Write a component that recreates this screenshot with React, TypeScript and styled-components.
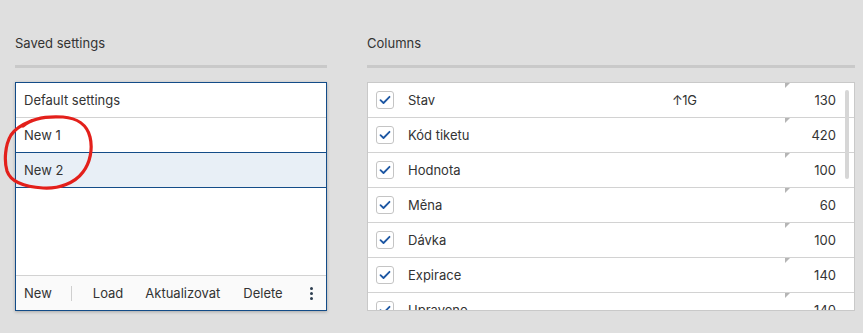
import React from 'react';
import styled, { createGlobalStyle } from 'styled-components';

const GlobalStyle = createGlobalStyle`
    html, body {
        margin: 0;
        padding: 0;
        background: #dfdfdf;
    }
    body {
        font-family: Inter, "Open Sans", sans-serif;
        color: #333;
        font-size: 13px;
    }
`;

const Page = styled.div`
    display: flex;
    gap: 40px;
    padding: 34px 8px 0 15px;
    height: 333px;
    box-sizing: border-box;
`;

const Column = styled.section<{ width: number }>`
    width: ${props => props.width}px;
    display: flex;
    flex-direction: column;
`;

const Title = styled.h2`
    margin: 0;
    font-size: 13px;
    font-weight: 400;
    line-height: 18px;
    color: #333;
`;

const Rule = styled.div`
    height: 3px;
    background: #c9c9c9;
    margin: 13px 0 14px;
`;

const SavedBox = styled.div`
    position: relative;
    height: 229px;
    box-sizing: border-box;
    border: 1px solid #134c88;
    background: #fff;
    display: flex;
    flex-direction: column;
    box-shadow: 0 1px 3px rgba(0, 0, 0, 0.25);
`;

const SavedList = styled.ul`
    flex: 1;
    list-style-type: none;
    margin: 0;
    padding: 0;
`;

const SavedItem = styled.li<{ selected?: boolean }>`
    height: 34px;
    display: flex;
    align-items: center;
    padding-left: 8px;
    border-bottom: 1px solid ${props => props.selected ? '#134c88' : '#d2d2d2'};
    background: ${props => props.selected ? '#e8eff6' : '#fff'};
    box-shadow: ${props => props.selected ? '0 -1px 0 #134c88' : 'none'};
`;

const Footer = styled.div`
    height: 34px;
    border-top: 1px solid #d2d2d2;
    background: #fafafa;
    display: flex;
    align-items: center;
    padding-left: 8px;
`;

const FooterButton = styled.button<{ space?: number }>`
    background: none;
    border: none;
    padding: 0;
    margin-right: ${props => props.space ?? 20}px;
    font: inherit;
    color: #333;
    cursor: pointer;
`;

const Divider = styled.span`
    width: 1px;
    height: 15px;
    background: #cfcfcf;
    margin: 0 21px 0 0;
`;

const Kebab = styled.button`
    margin-left: auto;
    margin-right: 13px;
    display: flex;
    flex-direction: column;
    gap: 2px;
    background: none;
    border: none;
    padding: 0;
    cursor: pointer;
    span {
        width: 3px;
        height: 3px;
        border-radius: 50%;
        background: #2d3e50;
    }
`;

const Scribble = styled.svg`
    position: absolute;
    left: -15px;
    top: 32px;
    pointer-events: none;
`;

const ColumnsBox = styled.div`
    position: relative;
    height: 229px;
    box-sizing: border-box;
    border: 1px solid #c9c9c9;
    background: #fff;
    overflow: hidden;
`;

const ColumnRow = styled.div`
    height: 34px;
    display: grid;
    grid-template-columns: 18px 278px 113px 60px;
    align-items: center;
    padding-left: 8px;
    border-bottom: 1px solid #d2d2d2;
`;

const Check = styled.span`
    width: 18px;
    height: 18px;
    box-sizing: border-box;
    border: 1px solid #c4c4c4;
    border-radius: 3px;
    display: flex;
    align-items: center;
    justify-content: center;
`;

const Label = styled.span`
    padding-left: 14px;
`;

const Tag = styled.span`
    letter-spacing: -0.5px;
`;

const WidthCell = styled.span`
    position: relative;
    height: 100%;
    display: flex;
    align-items: center;
    justify-content: flex-end;
    padding-right: 9px;
    &::before {
        content: '';
        position: absolute;
        left: 0;
        top: 0;
        border-top: 5px solid #b5b5b5;
        border-right: 5px solid transparent;
    }
`;

const ScrollThumb = styled.div`
    position: absolute;
    right: 5px;
    top: 7px;
    width: 4px;
    height: 89px;
    border-radius: 2px;
    background: #d6d6d6;
`;

const saved = [
    { name: 'Default settings' },
    { name: 'New 1' },
    { name: 'New 2', selected: true },
];

const columns = [
    { name: 'Stav', tag: '↑1G', width: 130 },
    { name: 'Kód tiketu', width: 420 },
    { name: 'Hodnota', width: 100 },
    { name: 'Měna', width: 60 },
    { name: 'Dávka', width: 100 },
    { name: 'Expirace', width: 140 },
    { name: 'Upraveno', width: 140 },
];

const CheckIcon = () => (
    <svg width="12" height="10" viewBox="0 0 12 10">
        <path d="M1.5 5.2 L4.5 8 L10.5 1.8" fill="none" stroke="#1d57a3" strokeWidth="1.8" strokeLinecap="round" strokeLinejoin="round" />
    </svg>
);

const App: React.FC = () => {
    return (
        <>
            <GlobalStyle />
            <Page>
                <Column width={312}>
                    <Title>Saved settings</Title>
                    <Rule />
                    <SavedBox>
                        <SavedList>
                            {saved.map(s => (
                                <SavedItem key={s.name} selected={s.selected}>{s.name}</SavedItem>
                            ))}
                        </SavedList>
                        <Footer>
                            <FooterButton space={19}>New</FooterButton>
                            <Divider />
                            <FooterButton space={22}>Load</FooterButton>
                            <FooterButton space={23}>Aktualizovat</FooterButton>
                            <FooterButton>Delete</FooterButton>
                            <Kebab><span /><span /><span /></Kebab>
                        </Footer>
                        {/* hand-drawn red mark around the new entries */}
                        <Scribble width="100" height="80" viewBox="0 0 100 80">
                            <path
                                d="M22 11 C30 4 45 1 62 2 C76 3 86 10 89 22 C92 34 89 48 82 57 C74 68 58 74 42 73 C26 72 10 68 6 56 C3 46 4 30 10 20 C14 14 20 10 30 6"
                                fill="none"
                                stroke="#e3201b"
                                strokeWidth="3.2"
                                strokeLinecap="round"
                            />
                        </Scribble>
                    </SavedBox>
                </Column>
                <Column width={488}>
                    <Title>Columns</Title>
                    <Rule />
                    <ColumnsBox>
                        {columns.map(c => (
                            <ColumnRow key={c.name}>
                                <Check><CheckIcon /></Check>
                                <Label>{c.name}</Label>
                                <Tag>{c.tag}</Tag>
                                <WidthCell>{c.width}</WidthCell>
                            </ColumnRow>
                        ))}
                        <ScrollThumb />
                    </ColumnsBox>
                </Column>
            </Page>
        </>
    );
};

export default App;
